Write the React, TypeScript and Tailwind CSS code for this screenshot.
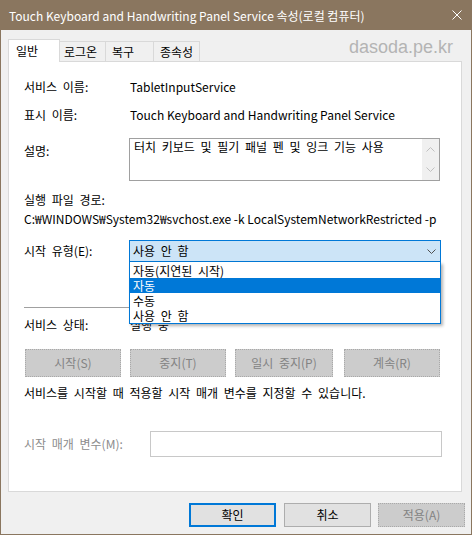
import { ReactNode } from 'react';

const FONT = '"Noto Sans CJK KR", "Noto Sans", sans-serif';

function Chevron({ up, color }: { up?: boolean; color: string }) {
  return (
    <svg width="9" height="5" viewBox="0 0 9 5" fill="none">
      <path d={up ? 'M0.5 4.5 L4.5 0.5 L8.5 4.5' : 'M0.5 0.5 L4.5 4.5 L8.5 0.5'} stroke={color} strokeWidth="1" />
    </svg>
  );
}

function Row({ label, children }: { label: string; children: ReactNode }) {
  return (
    <div className="flex h-[16px] items-center leading-[16px]">
      <span className="w-[106px]">{label}</span>
      <span>{children}</span>
    </div>
  );
}

function DisabledButton({ label, className }: { label: string; className: string }) {
  return (
    <div
      className={`flex items-center justify-center border border-dotted border-[#a9a9a9] bg-[#cccccc] text-[#838383] ${className}`}
    >
      {label}
    </div>
  );
}

export default function App() {
  const options = ['자동(지연된 시작)', '자동', '수동', '사용 안 함'];

  return (
    <div
      className="flex h-[535px] w-[472px] flex-col border-x border-b border-[#8a765f] bg-[#f0f0f0] text-[12px] text-black [word-spacing:3px]"
      style={{ fontFamily: FONT }}
    >
      {/* title bar */}
      <div className="flex h-[30px] shrink-0 items-center bg-[#8a765f] pl-[8px] pr-[9px] text-white [word-spacing:normal]">
        <span className="pt-px">Touch Keyboard and Handwriting Panel Service 속성(로컬 컴퓨터)</span>
        <svg className="ml-auto" width="10" height="10" viewBox="0 0 10 10">
          <path d="M0.5 0.5 L9.5 9.5 M9.5 0.5 L0.5 9.5" stroke="#ffffff" strokeWidth="1" />
        </svg>
      </div>

      {/* tabs */}
      <div className="mt-[9px] ml-[7px] flex h-[22px] items-end pr-[18px]">
        <div className="relative z-10 -mb-px h-[23px] w-[52px] border-x border-t border-[#d9d9d9] bg-white pl-[7px] leading-[22px]">
          일반
        </div>
        <div className="h-[20px] w-[46px] border-r border-t border-[#d9d9d9] pl-[4px] leading-[20px]">로그온</div>
        <div className="h-[20px] w-[48px] border-r border-t border-[#d9d9d9] pl-[6px] leading-[20px]">복구</div>
        <div className="h-[20px] w-[46px] border-r border-t border-[#d9d9d9] pl-[6px] leading-[20px]">종속성</div>
        <div
          className="ml-auto self-start -mt-[3px] text-[18px] leading-[22px] text-[#b4b4b4]"
          style={{ fontFamily: '"Liberation Sans", Arial, sans-serif' }}
        >
          dasoda.pe.kr
        </div>
      </div>

      {/* panel */}
      <div className="ml-[7px] h-[431px] w-[454px] shrink-0 border border-[#d9d9d9] bg-white pl-[15px] pt-[17px]">
        <Row label="서비스 이름:">TabletInputService</Row>
        <div className="mt-[12px]">
          <Row label="표시 이름:">
            <span className="[word-spacing:normal]">Touch Keyboard and Handwriting Panel Service</span>
          </Row>
        </div>

        <div className="mt-[15px] flex">
          <span className="mt-[5px] w-[105px] leading-[16px]">설명:</span>
          <div className="flex h-[43px] w-[311px] border border-[#a0a0a0]">
            <div className="flex-1 pl-[4px] leading-[16px]">터치 키보드 및 필기 패널 펜 및 잉크 기능 사용</div>
            <div className="flex w-[17px] flex-col items-center justify-between bg-[#f0f0f0] pb-[8px] pt-[8px]">
              <Chevron up color="#c0c0c0" />
              <Chevron color="#c0c0c0" />
            </div>
          </div>
        </div>

        <div className="mt-[11px] leading-[16px]">실행 파일 경로:</div>
        <div className="mt-[3px] leading-[16px] [word-spacing:normal]">
          C:₩WINDOWS₩System32₩svchost.exe -k LocalSystemNetworkRestricted -p
        </div>

        <div className="mt-[13px] flex h-[22px] items-center">
          <span className="w-[105px]">시작 유형(E):</span>
          <div className="relative h-[22px] w-[312px]">
            <div className="flex h-full items-center border border-[#0078d7] bg-[#cce4f7] pl-[3px] pr-[4px]">
              <span>사용 안 함</span>
              <span className="ml-auto">
                <Chevron color="#505050" />
              </span>
            </div>
            <div className="absolute left-0 top-full z-20 h-[62px] w-full border-x border-b border-[#0078d7] bg-white pt-px shadow-[2px_2px_3px_rgba(0,0,0,0.3)]">
              {options.map((o, i) => (
                <div
                  key={o}
                  className={`h-[15px] pl-[3px] leading-[15px] ${i === 1 ? 'bg-[#0078d7] text-white' : ''}`}
                >
                  {o}
                </div>
              ))}
            </div>
          </div>
        </div>

        <div className="mt-[45px] h-px w-[417px] bg-[#a0a0a0]" />

        <div className="mt-[9px]">
          <Row label="서비스 상태:">실행 중</Row>
        </div>

        <div className="mt-[16px] ml-px flex h-[28px]">
          <DisabledButton label="시작(S)" className="w-[96px]" />
          <DisabledButton label="중지(T)" className="ml-[9px] w-[96px]" />
          <DisabledButton label="일시 중지(P)" className="ml-[9px] w-[98px]" />
          <DisabledButton label="계속(R)" className="ml-[11px] w-[96px]" />
        </div>

        <div className="mt-[8px] leading-[16px]">서비스를 시작할 때 적용할 시작 매개 변수를 지정할 수 있습니다.</div>

        <div className="mt-[30px] flex h-[26px] items-center">
          <span className="w-[126px] text-[#8c8c8c]">시작 매개 변수(M):</span>
          <div className="h-[26px] w-[292px] border border-[#c8c8c8] bg-white" />
        </div>
      </div>

      {/* dialog buttons */}
      <div className="mt-[11px] flex justify-end pr-[6px]">
        <div className="flex h-[24px] w-[87px] items-center justify-center border-2 border-[#0078d7] bg-[#e1e1e1]">
          확인
        </div>
        <div className="ml-[8px] flex h-[24px] w-[87px] items-center justify-center border border-[#adadad] bg-[#e1e1e1]">
          취소
        </div>
        <DisabledButton label="적용(A)" className="ml-[7px] h-[24px] w-[87px]" />
      </div>
    </div>
  );
}
